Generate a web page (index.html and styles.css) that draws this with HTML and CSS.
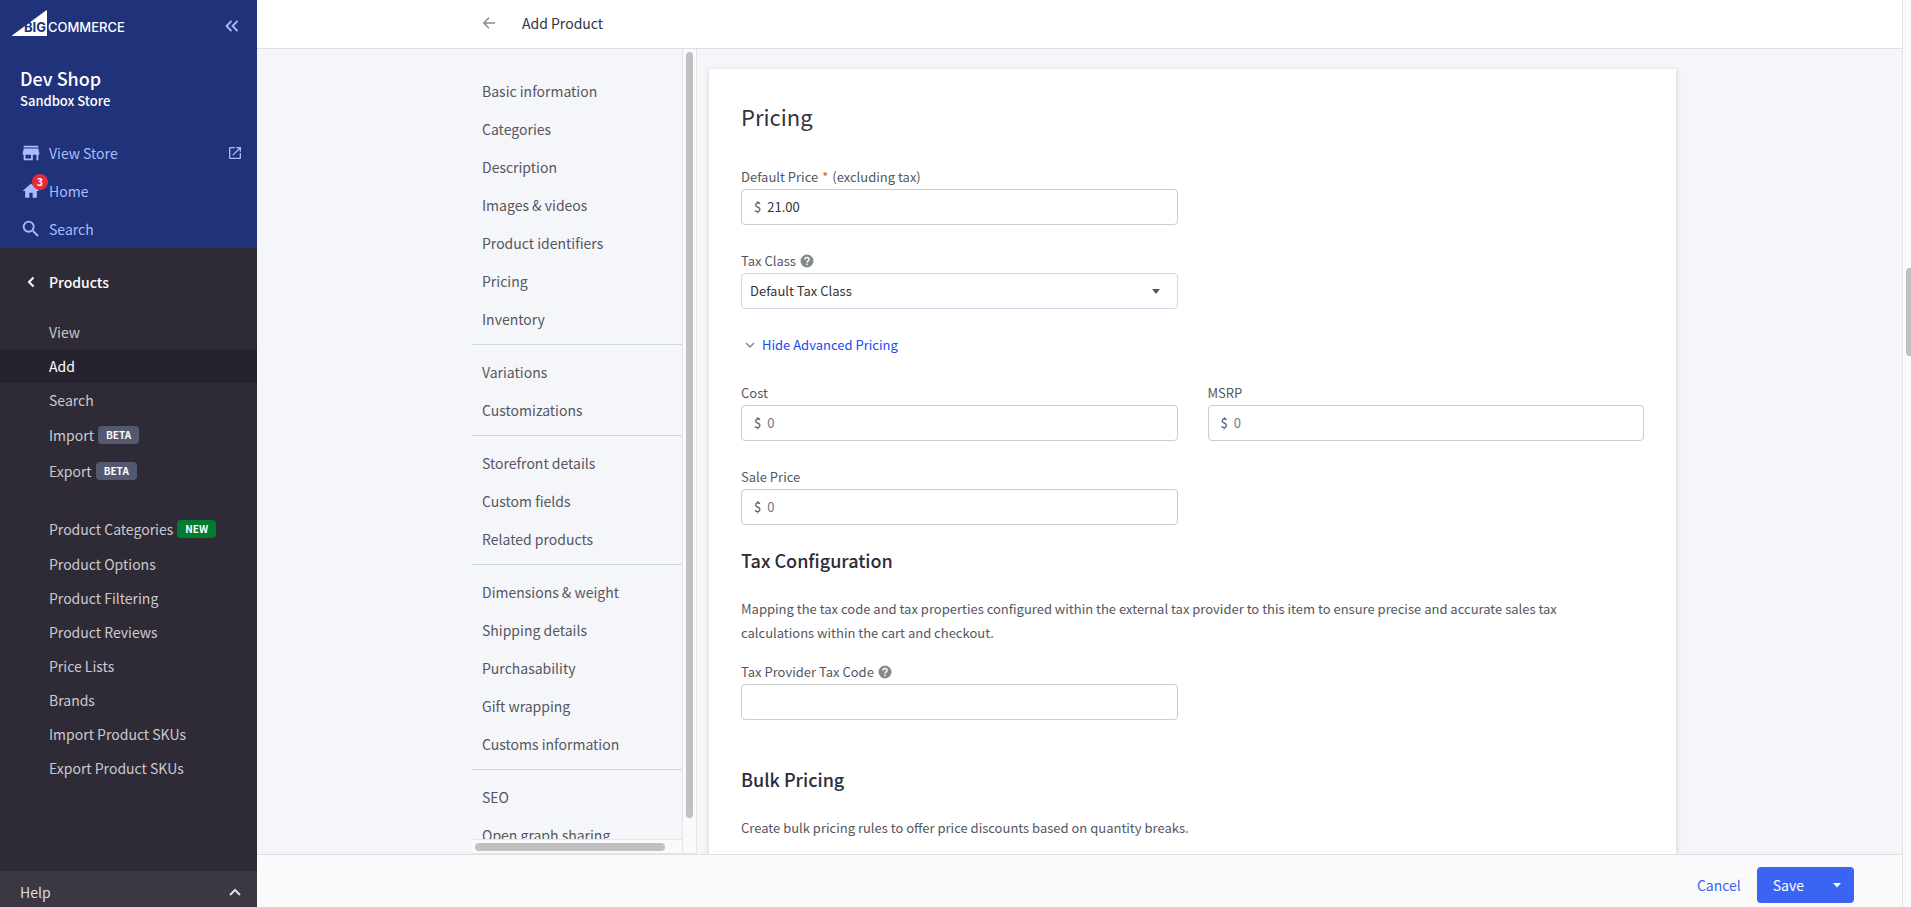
FILE: index.html
```html
<!DOCTYPE html>
<html lang="en">
<head>
<meta charset="utf-8">
<title>Add Product</title>
<link rel="stylesheet" href="styles.css">
</head>
<body>
<div class="app">
  <aside class="sidebar">
    <div class="brand">
      <div class="brand-row">
        <svg class="logo" viewBox="0 0 118 28" role="img" aria-label="BigCommerce">
          <path d="M0 26.500 34 1.500Q35 1 35 2V27H1Q-1 27 0 26.500Z" fill="#fff"/>
          <text class="logo-big" x="12" y="23">BIG</text>
          <text class="logo-commerce" x="36" y="23">COMMERCE</text>
        </svg>
        <button class="icon-button" aria-label="Collapse menu">
          <svg width="14" height="12" viewBox="0 0 14 12"><path d="M6.500 1 1.500 6l5 5M12.500 1l-5 5 5 5" fill="none" stroke="currentColor" stroke-width="1.800"/></svg>
        </button>
      </div>
      <div class="store-name">Dev Shop</div>
      <div class="store-kind">Sandbox Store</div>
      <nav class="top-links">
        <a href="#"><span class="icon"><svg width="22" height="22" viewBox="0 0 24 24"><path fill="currentColor" d="M20 4H4v2h16V4zm1 10v-2l-1-5H4l-1 5v2h1v6h10v-6h4v6h2v-6h1zm-9 4H6v-4h6v4z"/></svg></span>View Store
          <svg class="external" width="16" height="16" viewBox="0 0 24 24"><path fill="currentColor" d="M19 19H5V5h7V3H5a2 2 0 0 0-2 2v14a2 2 0 0 0 2 2h14c1.100 0 2-.9 2-2v-7h-2v7zM14 3v2h3.590l-9.830 9.830 1.410 1.410L19 6.410V10h2V3h-7z"/></svg></a>
        <a href="#"><span class="icon"><svg width="20" height="20" viewBox="0 0 24 24"><path fill="currentColor" d="M10 20v-6h4v6h5v-8h3L12 3 2 12h3v8z"/></svg><span class="count">3</span></span>Home</a>
        <a href="#"><span class="icon"><svg width="22" height="22" viewBox="0 0 24 24"><path fill="currentColor" d="M15.500 14h-.79l-.28-.27A6.471 6.471 0 0 0 16 9.500 6.500 6.500 0 1 0 9.500 16c1.610 0 3.090-.59 4.230-1.570l.27.28v.79l5 4.990L20.490 19l-4.990-5zm-6 0C7.010 14 5 11.990 5 9.500S7.010 5 9.500 5 14 7.010 14 9.500 11.990 14 9.500 14z"/></svg></span>Search</a>
      </nav>
    </div>
    <nav class="section">
      <a class="section-title" href="#"><span class="icon"><svg width="8" height="12" viewBox="0 0 8 12"><path d="M6.500 1.500 2 6l4.500 4.500" fill="none" stroke="currentColor" stroke-width="2"/></svg></span>Products</a>
      <div class="links">
        <a href="#">View</a>
        <a href="#" class="active">Add</a>
        <a href="#">Search</a>
        <a href="#" class="tagged">Import <span class="tag">BETA</span></a>
        <a href="#" class="tagged">Export <span class="tag">BETA</span></a>
      </div>
      <div class="links links-second">
        <a href="#" class="tagged">Product Categories <span class="tag tag-new">NEW</span></a>
        <a href="#">Product Options</a>
        <a href="#">Product Filtering</a>
        <a href="#">Product Reviews</a>
        <a href="#">Price Lists</a>
        <a href="#">Brands</a>
        <a href="#">Import Product SKUs</a>
        <a href="#">Export Product SKUs</a>
      </div>
    </nav>
    <button class="help">Help
      <svg width="12" height="8" viewBox="0 0 12 8"><path d="M1 7l5-5 5 5" fill="none" stroke="currentColor" stroke-width="2"/></svg>
    </button>
  </aside>

  <div class="page">
    <header class="header">
      <div class="container header-row">
        <button class="back" aria-label="Back"><svg width="12" height="12" viewBox="0 0 12 12"><path d="M12 6H1M6 .8.800 6 6 11.200" fill="none" stroke="currentColor" stroke-width="1.500"/></svg></button>
        <h1>Add Product</h1>
      </div>
    </header>

    <main class="main container">
      <div class="jump">
        <nav class="jump-list">
          <div class="group"><a href="#">Basic information</a><a href="#">Categories</a><a href="#">Description</a><a href="#">Images &amp; videos</a><a href="#">Product identifiers</a><a href="#">Pricing</a><a href="#">Inventory</a></div>
          <div class="group"><a href="#">Variations</a><a href="#">Customizations</a></div>
          <div class="group"><a href="#">Storefront details</a><a href="#">Custom fields</a><a href="#">Related products</a></div>
          <div class="group"><a href="#">Dimensions &amp; weight</a><a href="#">Shipping details</a><a href="#">Purchasability</a><a href="#">Gift wrapping</a><a href="#">Customs information</a></div>
          <div class="group"><a href="#">SEO</a><a href="#">Open graph sharing</a></div>
        </nav>
        <div class="track-v"><div class="thumb"></div></div>
        <div class="track-h"><div class="thumb"></div></div>
      </div>

      <form class="card">
        <h2>Pricing</h2>
        <div class="fields">
          <div class="field">
            <label for="price">Default Price <span class="required">*</span> (excluding tax)</label>
            <div class="input-box"><span>$</span><input id="price" type="text" value="21.00"></div>
          </div>
          <div class="field first-column">
            <label for="tax-class">Tax Class <svg class="hint" viewBox="0 0 14 14"><circle cx="7" cy="7" r="6.500" fill="#848a89"/><path d="M4.900 5.500Q4.900 3.500 7 3.500t2.100 1.800Q9.100 6.300 8 7 7 7.500 7 8.600M7 9.600v1.500" fill="none" stroke="#fff" stroke-width="1.400"/></svg></label>
            <select id="tax-class" class="select"><option>Default Tax Class</option></select>
          </div>
        </div>
        <button type="button" class="toggle"><svg width="10" height="7" viewBox="0 0 10 7"><path d="M1 1l4 4 4-4" fill="none" stroke="#848a89" stroke-width="1.500"/></svg>Hide Advanced Pricing</button>
        <div class="fields">
          <div class="field">
            <label for="cost">Cost</label>
            <div class="input-box"><span>$</span><input id="cost" type="text" placeholder="0"></div>
          </div>
          <div class="field">
            <label for="msrp">MSRP</label>
            <div class="input-box"><span>$</span><input id="msrp" type="text" placeholder="0"></div>
          </div>
          <div class="field">
            <label for="sale">Sale Price</label>
            <div class="input-box"><span>$</span><input id="sale" type="text" placeholder="0"></div>
          </div>
        </div>
        <h3>Tax Configuration</h3>
        <p>Mapping the tax code and tax properties configured within the external tax provider to this item to ensure precise and accurate sales tax calculations within the cart and checkout.</p>
        <div class="fields fields-tax">
          <div class="field">
            <label for="tax-code">Tax Provider Tax Code <svg class="hint" viewBox="0 0 14 14"><circle cx="7" cy="7" r="6.500" fill="#848a89"/><path d="M4.900 5.500Q4.900 3.500 7 3.500t2.100 1.800Q9.100 6.300 8 7 7 7.500 7 8.600M7 9.600v1.500" fill="none" stroke="#fff" stroke-width="1.400"/></svg></label>
            <div class="input-box"><input id="tax-code" type="text"></div>
          </div>
        </div>
        <h3 class="bulk">Bulk Pricing</h3>
        <p>Create bulk pricing rules to offer price discounts based on quantity breaks.</p>
      </form>
    </main>

    <footer class="footer">
      <button class="cancel">Cancel</button>
      <div class="split">
        <button class="save">Save</button>
        <button class="more" aria-label="More save options"><svg width="8" height="5" viewBox="0 0 8 5"><path d="M0 0h8L4 4.500z" fill="#fff"/></svg></button>
      </div>
    </footer>
  </div>
  <div class="page-track"><div class="page-thumb"></div></div>
</div>
</body>
</html>
```

FILE: styles.css
```css
* { box-sizing: border-box; }

body {
  margin: 0;
  font: 14px/20px "Noto Sans CJK SC", "Open Sans", sans-serif;
  color: #313440;
}

a { color: inherit; text-decoration: none; }

button, input, select { font: inherit; color: inherit; }

button {
  margin: 0;
  padding: 0;
  border: 0;
  background: none;
  cursor: pointer;
}

h1, h2, h3, p { margin: 0; }
svg { display: block; }

.app { display: flex; height: 100vh; overflow: hidden; }

/* Sidebar */
.sidebar {
  flex: 0 0 257px;
  display: flex;
  flex-direction: column;
  background: #2f2b36;
  color: #cbc9cf;
}

.brand { height: 248px; background: #20327a; color: #a9bcfc; }

.brand-row {
  display: flex;
  justify-content: space-between;
  align-items: flex-start;
  padding: 9px 18px 0 12px;
}

.logo { width: 118px; height: 28px; }
.logo text { font: 500 13px Inter, sans-serif; }
.logo .logo-big { fill: #20327a; font-weight: 700; }
.logo-commerce { fill: #fff; }
.icon-button { padding: 11px 0 0; }

.store-name {
  margin: 28px 20px 0;
  font-size: 18px;
  line-height: 26px;
  font-weight: 500;
  color: #fff;
}

.store-kind {
  margin: 0 20px;
  font-size: 13px;
  font-weight: 500;
  color: #fff;
}

.top-links { display: flex; flex-direction: column; padding-top: 23px; }

.top-links a {
  display: flex;
  align-items: center;
  height: 38px;
  padding: 0 14px 0 20px;
}

.icon {
  position: relative;
  display: flex;
  justify-content: center;
  width: 22px;
  margin-right: 7px;
}

.external { margin-left: auto; }

.count {
  position: absolute;
  left: 12px;
  top: -7px;
  width: 16px;
  height: 16px;
  border-radius: 8px;
  background: #e42d3c;
  color: #fff;
  font-size: 10px;
  line-height: 16px;
  font-weight: 700;
  text-align: center;
}

.section { flex: 1; }

.section-title {
  display: flex;
  align-items: center;
  height: 67px;
  padding-left: 20px;
  font-weight: 500;
  color: #fff;
}

.links { padding-bottom: 19px; }

.links a {
  display: flex;
  align-items: center;
  gap: 4px;
  height: 34px;
  padding-left: 49px;
}

.links .tagged { height: 36px; }
.links .active { background: #26232e; color: #fff; }
.links-second { padding-top: 2px; border-top: 1px solid #292530; }

.tag {
  padding: 0 8px;
  border-radius: 4px;
  background: #535970;
  color: #fff;
  font-size: 10px;
  line-height: 18px;
  font-weight: 700;
}

.tag-new { background: #007c30; }

.help {
  display: flex;
  justify-content: space-between;
  align-items: center;
  height: 36px;
  padding: 6px 16px 0 20px;
  background: #3c3843;
  color: #dddce0;
}

/* Page */
.page {
  flex: 1;
  min-width: 0;
  display: flex;
  flex-direction: column;
  background: #f5f6f9;
}

.container { width: 100%; max-width: 1215px; margin: 0 auto; }
.header { background: #fff; border-bottom: 1px solid #dcdfeb; }

.header-row {
  display: flex;
  align-items: center;
  gap: 27px;
  height: 48px;
  padding: 0 11px 3px;
}

.back { color: #8a8a99; }
h1 { font-size: 14px; font-weight: 400; }

.main {
  flex: 1;
  min-height: 0;
  display: flex;
  gap: 12px;
  padding-right: 11px;
  overflow: hidden;
}

.jump {
  flex: 0 0 225px;
  display: grid;
  grid-template-columns: minmax(0, 1fr) 15px;
  grid-template-rows: minmax(0, 1fr) 15px;
}

.jump-list { padding-top: 23px; overflow: hidden; color: #55565f; }
.group + .group { margin-top: 6px; padding-top: 8px; border-top: 1px solid #d0d6ea; }

.jump-list a {
  display: block;
  padding-left: 10px;
  line-height: 38px;
}

.track-v {
  grid-column: 2;
  grid-row: 1 / 3;
  padding: 3px;
  background: #fafafa;
  border: 1px solid #e4e5e8;
  border-top: 0;
}

.track-h {
  grid-column: 1;
  grid-row: 2;
  padding: 3px;
  background: #fafafa;
  border: solid #e4e5e8;
  border-width: 1px 0;
}

.thumb { border-radius: 4px; background: #c1c1c1; }
.track-v .thumb { height: 96%; }
.track-h .thumb { width: 93%; height: 8px; }

.card {
  flex: 1;
  min-width: 0;
  margin-top: 20px;
  padding: 32px;
  background: #fff;
  box-shadow: 0 1px 5px rgba(49, 52, 64, .2);
  color: #55565f;
}

h2 {
  margin-bottom: 36px;
  font-size: 22px;
  line-height: 30px;
  font-weight: 400;
  color: #313440;
}

h3 {
  margin: 22px 0 24px;
  font-size: 18px;
  line-height: 26px;
  font-weight: 500;
  color: #2b2c38;
}

p { padding-right: 16px; font-size: 13px; line-height: 24px; }
.fields { display: grid; grid-template-columns: 1fr 1fr; gap: 26px 30px; font-size: 13px; }
.fields-tax { margin-top: 17px; }
.first-column { grid-column: 1; }
.field label { display: flex; align-items: center; gap: 4px; margin-bottom: 2px; }
.required { color: #f4512c; }
.hint { width: 14px; height: 14px; }

.input-box {
  display: flex;
  align-items: center;
  gap: 6px;
  height: 36px;
  padding: 0 12px;
  border: 1px solid #ccc;
  border-radius: 4px;
}

.input-box input {
  flex: 1;
  min-width: 0;
  padding: 0;
  border: 0;
  outline: 0;
  background: none;
  color: #313440;
}

.input-box input::placeholder { color: #75767c; opacity: 1; }

.select {
  display: block;
  width: 100%;
  height: 36px;
  padding: 0 8px;
  border: 1px solid #d3d6e8;
  border-radius: 4px;
  appearance: none;
  background: #fff url("data:image/svg+xml,%3Csvg xmlns='http://www.w3.org/2000/svg' width='8' height='5'%3E%3Cpath d='M0 0h8L4 5z' fill='%23515670'/%3E%3C/svg%3E") no-repeat right 17px center;
  color: #313440;
}

.toggle {
  display: flex;
  align-items: center;
  gap: 7px;
  margin: 26px 0 28px;
  padding-left: 4px;
  font-size: 13px;
  color: #1a49f5;
}

h3.bulk { margin: 46px 0 24px; }

.footer {
  display: flex;
  justify-content: flex-end;
  align-items: center;
  gap: 16px;
  height: 53px;
  padding: 8px 48px 0 0;
  border-top: 1px solid #dcdfe6;
  background: #fafafa;
}

.cancel { color: #3c64f4; }
.split { display: flex; color: #fff; }

.split button { height: 36px; background: #3c64f4; }
.save { padding: 0 16px; border-radius: 4px 0 0 4px; }
.more { display: grid; place-items: center; width: 34px; border-radius: 0 4px 4px 0; }

.page-track {
  flex: 0 0 9px;
  padding: 268px 0 0 3px;
  border-left: 1px solid #e4e4e4;
  background: #fafafa;
}

.page-thumb { height: 88px; border-radius: 4px 0 0 4px; background: #c1c1c1; }
```
